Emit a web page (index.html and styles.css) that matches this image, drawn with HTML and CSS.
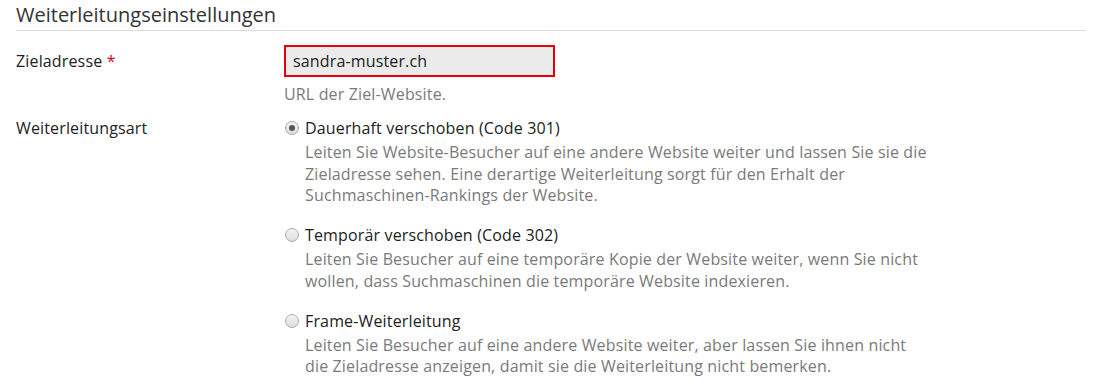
FILE: index.html
```html
<!DOCTYPE html>
<html>
    <head>
        <meta charset="utf-8">
        <title>Weiterleitungseinstellungen</title>
        <link rel="stylesheet" href="styles.css">
    </head>
    <body>
        <div class="panel">
            <h3 class="section-title">Weiterleitungseinstellungen</h3>

            <div class="form-row">
                <label class="field-label" for="target">Zieladresse <span class="required">*</span></label>
                <div class="field">
                    <input id="target" class="text-input" type="text" name="target" value="sandra-muster.ch">
                    <div class="hint">URL der Ziel-Website.</div>
                </div>
            </div>

            <div class="form-row form-row-options">
                <div class="field-label">Weiterleitungsart</div>
                <div class="field">
                    <div class="option">
                        <label class="option-label">
                            <input class="radio" type="radio" name="redirect" value="301" checked>
                            Dauerhaft verschoben (Code 301)
                        </label>
                        <div class="option-desc">Leiten Sie Website-Besucher auf eine andere Website weiter und lassen Sie sie die Zieladresse sehen. Eine derartige Weiterleitung sorgt für den Erhalt der Suchmaschinen-Rankings der Website.</div>
                    </div>
                    <div class="option">
                        <label class="option-label">
                            <input class="radio" type="radio" name="redirect" value="302">
                            Temporär verschoben (Code 302)
                        </label>
                        <div class="option-desc">Leiten Sie Besucher auf eine temporäre Kopie der Website weiter, wenn Sie nicht wollen, dass Suchmaschinen die temporäre Website indexieren.</div>
                    </div>
                    <div class="option">
                        <label class="option-label">
                            <input class="radio" type="radio" name="redirect" value="frame">
                            Frame-Weiterleitung
                        </label>
                        <div class="option-desc">Leiten Sie Besucher auf eine andere Website weiter, aber lassen Sie ihnen nicht die Zieladresse anzeigen, damit sie die Weiterleitung nicht bemerken.</div>
                    </div>
                </div>
            </div>
        </div>
    </body>
</html>
```

FILE: styles.css
```css
body {
margin: 0;
background: #fff;
font-family: "Open Sans", "Liberation Sans", sans-serif;
font-size: 16px;
letter-spacing: 0.15px;
color: #222;
}
.panel {
padding: 0 15px 0 16px;
}
.section-title {
margin: 0;
padding: 3px 0 3px 0;
font-size: 20px;
line-height: 24px;
font-weight: normal;
letter-spacing: 0;
color: #333;
border-bottom: 1px solid #ddd;
}
.form-row {
display: grid;
grid-template-columns: 268px 1fr;
margin-top: 14px;
}
.form-row-options {
margin-top: 13px;
}
.field-label {
line-height: 32px;
}
.form-row-options .field-label {
line-height: 20px;
}
.required {
color: #d0021b;
}
.text-input {
box-sizing: border-box;
width: 271px;
height: 32px;
margin: 0;
border: 2px solid #e8000b;
background-color: #ebebeb;
padding: 0 7px;
font-family: inherit;
font-size: 16px;
letter-spacing: 0.15px;
color: #222;
outline: none;
}
.hint {
margin-top: 7px;
line-height: 21px;
color: #7a7a7a;
}
.option {
margin-bottom: 18.5px;
}
.option-label {
display: flex;
align-items: center;
line-height: 20px;
cursor: pointer;
}
.radio {
appearance: none;
-webkit-appearance: none;
box-sizing: border-box;
width: 14px;
height: 14px;
margin: 0 6px 0 1px;
border: 1px solid #adadad;
border-radius: 50%;
background: linear-gradient(#f4f4f4, #dcdcdc);
display: flex;
align-items: center;
justify-content: center;
}
.radio:checked::after {
content: "";
width: 6px;
height: 6px;
border-radius: 50%;
background: #555;
}
.option-desc {
margin-top: 4px;
padding-left: 21px;
max-width: 626px;
line-height: 21.5px;
color: #7a7a7a;
}
```
